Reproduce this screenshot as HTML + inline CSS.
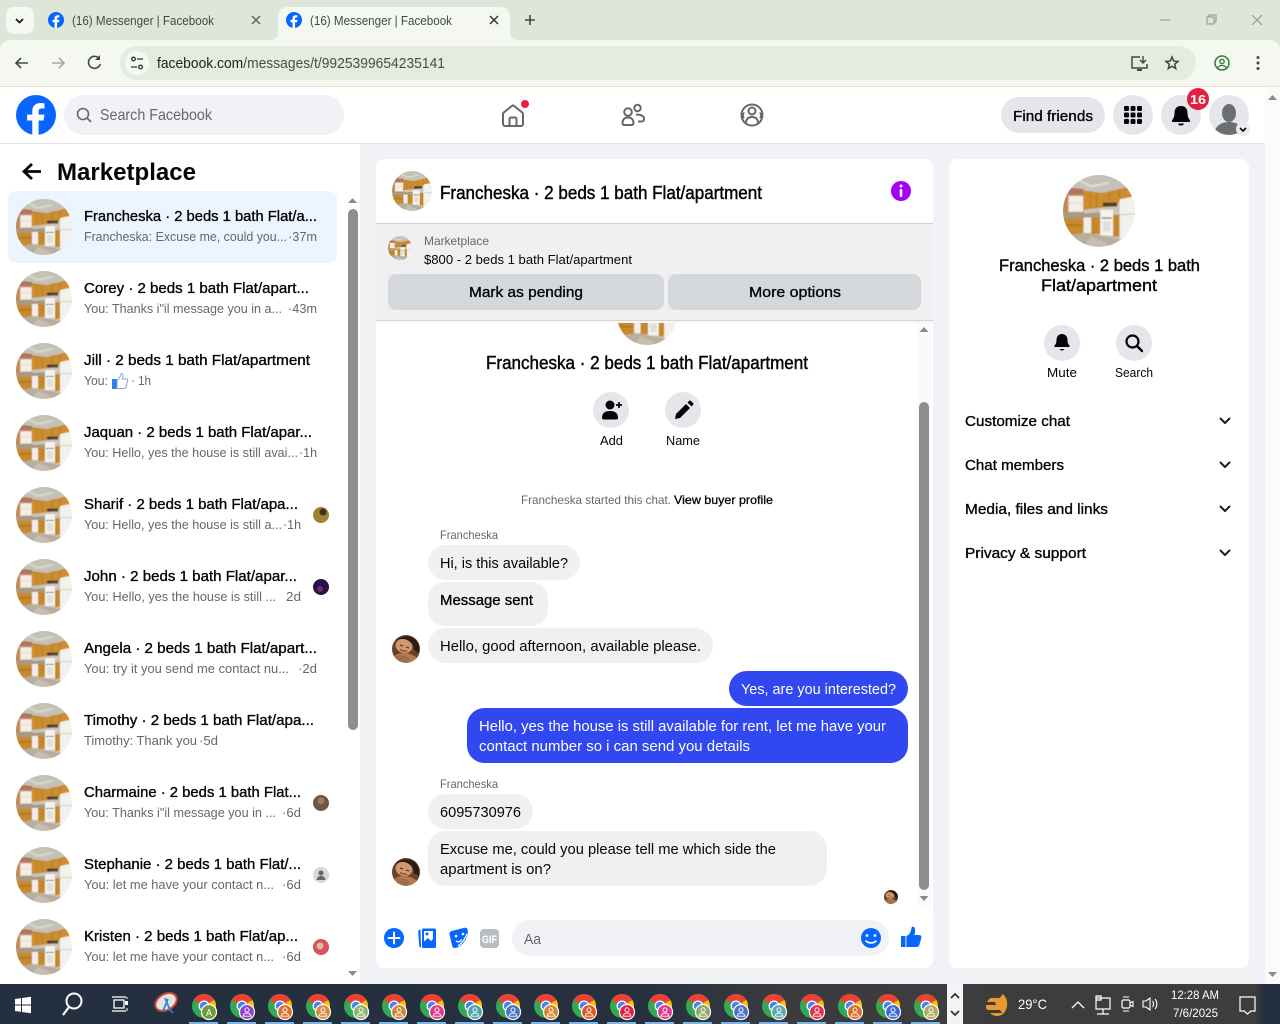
<!DOCTYPE html>
<html lang="en"><head><meta charset="utf-8"><title>(16) Messenger | Facebook</title>
<style>
html,body{margin:0;padding:0;width:1280px;height:1024px;overflow:hidden;background:#fff}
svg{display:block;position:absolute;left:0;top:0}
text{font-family:"Liberation Sans",sans-serif;font-size:15px;fill:#050505}
.m{stroke:#050505;stroke-width:.35px}
.s{font-size:13px;fill:#65676b}
.g{font-size:12px;fill:#65676b}
.w{fill:#fff}
.t{font-size:13px;fill:#3f4a3e}
.tb{font-size:13px;fill:#fff}
.h{font-size:18px;stroke:#050505;stroke-width:.45px}
#tbi circle{stroke:#fff;stroke-width:1.200px}
</style></head><body>
<svg width="1280" height="1024" viewBox="0 0 1280 1024" xmlns="http://www.w3.org/2000/svg">
<defs>
<clipPath id="c56"><circle cx="28" cy="28" r="28"/></clipPath>
<filter id="soft" x="-5%" y="-5%" width="110%" height="110%"><feGaussianBlur stdDeviation=".4"/></filter>
<linearGradient id="tbg" x1="0" x2="1" y1="0" y2="0"><stop offset="0" stop-color="#24303f"/><stop offset=".5" stop-color="#26303f"/><stop offset=".62" stop-color="#3c3c3f"/><stop offset=".98" stop-color="#3f3d3b"/><stop offset=".988" stop-color="#24303f"/></linearGradient>
<symbol id="k" viewBox="0 0 56 56"><g clip-path="url(#c56)"><g filter="url(#soft)">
<rect x="-2" y="-2" width="60" height="60" fill="#c9c5ba"/>
<path d="M-2-2h60v12L44 11 30 14 16 11-2 8z" fill="#c4c1b7"/>
<path d="M10 3l12 6 14-3" fill="none" stroke="#dcd9d0" stroke-width="2"/>
<path d="M-2 9l18 2v6H-2z" fill="#b3745c"/>
<path d="M-2 15h18v19H-2z" fill="#c08a54"/>
<rect x="4" y="16" width="12" height="13" fill="#f3efe8" stroke="#cf9a80" stroke-width=".8"/>
<path d="M4 22h12" stroke="#d8d2c8" stroke-width=".7"/>
<path d="M16 12l14 2 14-3 10-3 4 2v10H44l-2 4-26 3z" fill="#cb8d2e"/>
<path d="M21 13v12M26 14v11M36 13v9M44 11v8" stroke="#a86e1e" stroke-width=".5"/>
<rect x="31" y="21.500" width="11" height="3" fill="#4b4033"/>
<path d="M-2 29h18v1l15-1v5H-2z" fill="#a99b82"/>
<path d="M-2 34h18v12l-18 2z" fill="#c88a2c"/>
<path d="M1 39h14" stroke="#8e6020" stroke-width=".7"/>
<rect x="16" y="33" width="6" height="12" fill="#f0efe9"/>
<rect x="22" y="33" width="7" height="13" fill="#c68828"/>
<rect x="29" y="27" width="10" height="20" fill="#f4f3ef"/>
<rect x="30" y="33" width="8" height="1" fill="#7d7970"/><rect x="31" y="36" width="6" height="8" fill="#e0dfd9"/>
<path d="M39 31h5v17h-5z" fill="#c68828"/>
<path d="M44 19l14-3v32l-14 2z" fill="#f2f1ed"/>
<path d="M44 31l14-1" stroke="#b8b6ae" stroke-width=".6"/>
<path d="M-2 48l18-3 13 2 15 3 14-2v10H-2z" fill="#b9ae9d"/>
<path d="M14 58l8-10 12 5 2 5z" fill="#c9bfb0"/>
</g></g></symbol>
<symbol id="fb" viewBox="0 0 40 40"><circle cx="20" cy="20" r="20" fill="#0866ff"/><path d="M22.6 40V25.5h4.9l.9-5.9h-5.8v-3.1c0-1.9.7-3 3.2-3h2.7V8.4c-1.1-.2-2.5-.3-4.2-.3-5 0-8 3-8 8.2v3.3h-5.200v5.900h5.200V40z" fill="#fff"/></symbol>
<symbol id="fc" viewBox="0 0 56 56"><g clip-path="url(#c56)"><g filter="url(#soft)"><rect width="56" height="56" fill="#6a4028"/><path d="M0 56c2-16 10-20 24-20s26 6 32 20z" fill="#b07a54"/><ellipse cx="24" cy="22" rx="17" ry="14" transform="rotate(15 24 22)" fill="#cf9670"/><path d="M8 12C14 2 32 0 42 6c12 7 14 18 12 30l-10-6c0-10-8-20-20-22-6-1-12 0-16 4z" fill="#2a1a14"/><path d="M16 20l6 2M28 24l6 2" stroke="#4a2a1c" stroke-width="2"/><path d="M16 29c5 3 10 4 14 3" stroke="#8d3f32" stroke-width="2.500" fill="none"/><path d="M4 44c10-6 22-4 32 4l-4 8H6z" fill="#a06c48"/></g></g></symbol>
<symbol id="ch" viewBox="0 0 24 24">
<circle cx="12" cy="12" r="12" fill="#34a853"/>
<path d="M12 12L1.600 6A12 12 0 0 1 22.400 6z" fill="#ea4335"/>
<path d="M12 12L22.400 6A12 12 0 0 1 12 24z" fill="#fbbc04"/>
<circle cx="12" cy="12" r="5.500" fill="#fff"/><circle cx="12" cy="12" r="4.200" fill="#4285f4"/></symbol>
<symbol id="par" viewBox="0 0 20 20"><circle cx="10" cy="7" r="3" fill="none" stroke="#fff" stroke-width="1.300"/><path d="M4.500 16c.5-3 2.500-4.500 5.500-4.500s5 1.500 5.500 4.500z" fill="none" stroke="#fff" stroke-width="1.300"/></symbol>
<path id="chev" d="M-4.500-2.500L0 2 4.500-2.500" fill="none" stroke="#1c1e21" stroke-width="2" stroke-linecap="round" stroke-linejoin="round"/>
</defs>

<!-- window chrome -->
<rect width="1280" height="87" fill="#dde6d8"/>
<rect x="6" y="7" width="28" height="27" rx="8" fill="#f5f8f1"/>
<path d="M16 19l3.500 3.500L23 19" fill="none" stroke="#1f1f1f" stroke-width="1.800"/>
<use href="#fb" x="48" y="12" width="16" height="16"/>
<text class="t" x="72" y="25" textLength="142" lengthAdjust="spacingAndGlyphs">(16) Messenger | Facebook</text>
<path d="M252 16l8 8m0-8l-8 8" stroke="#5a645a" stroke-width="1.500"/>
<path d="M270 40c6 0 8-3 8-8V17c0-6 4-10 10-10h212c6 0 10 4 10 10v15c0 5 2 8 8 8z" fill="#f4f8f0"/>
<use href="#fb" x="286" y="12" width="16" height="16"/>
<text class="t" x="310" y="25" textLength="142" lengthAdjust="spacingAndGlyphs">(16) Messenger | Facebook</text>
<path d="M490 16l8 8m0-8l-8 8" stroke="#2f372f" stroke-width="1.500"/>
<path d="M530 15v10m-5-5h10" stroke="#3f4a3e" stroke-width="1.600"/>
<path d="M1160 20h10" stroke="#8d958b" stroke-width="1"/>
<path d="M1207 17h7v7h-7zM1209 17v-2h7v7h-2" fill="none" stroke="#8d958b"/>
<path d="M1252 15l10 10m0-10l-10 10" stroke="#8d958b"/>
<path d="M0 87V52c0-8 4-12 12-12h1256c8 0 12 4 12 12v35z" fill="#f4f8f0"/>
<rect x="120" y="46" width="1076" height="34" rx="17" fill="#e4ecdf"/>
<circle cx="137" cy="63" r="12" fill="#f4f8f0"/>
<path d="M16 63h12M21 58l-5 5 5 5" fill="none" stroke="#3f4a3e" stroke-width="1.600"/>
<path d="M52 63h12m-5-5l5 5-5 5" fill="none" stroke="#a2aa9f" stroke-width="1.600"/>
<path d="M99.500 59a6 6 0 1 0 .8 5" fill="none" stroke="#3f4a3e" stroke-width="1.600"/><path d="M100 55v5h-5z" fill="#3f4a3e"/>
<circle cx="133.500" cy="59" r="1.800" fill="none" stroke="#2f372f" stroke-width="1.300"/><path d="M137 59h6M131 67h6" stroke="#2f372f" stroke-width="1.300"/><circle cx="140.500" cy="67" r="1.800" fill="none" stroke="#2f372f" stroke-width="1.300"/>
<text x="157" y="68" textLength="288" lengthAdjust="spacingAndGlyphs" style="font-size:14.500px;fill:#474f46"><tspan fill="#1f1f1f">facebook.com</tspan>/messages/t/9925399654235141</text>
<path d="M1140 57h-8v11h15v-4" fill="none" stroke="#3f4a3e" stroke-width="1.500"/><path d="M1137 70h5" stroke="#3f4a3e" stroke-width="2"/><path d="M1143 56v6m-3-2l3 3 3-3" fill="none" stroke="#3f4a3e" stroke-width="1.400"/>
<path d="M1172 57l1.700 4 4.300.4-3.300 2.800 1 4.300-3.700-2.300-3.700 2.300 1-4.300-3.300-2.800 4.300-.4z" fill="none" stroke="#3f4a3e" stroke-width="1.500"/>
<circle cx="1222" cy="63" r="7" fill="none" stroke="#2e7d32" stroke-width="1.500"/><circle cx="1222" cy="61.500" r="2.200" fill="none" stroke="#2e7d32" stroke-width="1.300"/><path d="M1217.500 68c1-2 2.500-2.500 4.500-2.500s3.500.5 4.500 2.500" fill="none" stroke="#2e7d32" stroke-width="1.300"/>
<circle cx="1258" cy="57.500" r="1.500" fill="#3f4a3e"/><circle cx="1258" cy="63" r="1.500" fill="#3f4a3e"/><circle cx="1258" cy="68.500" r="1.500" fill="#3f4a3e"/>
<rect y="86" width="1280" height="1" fill="#dfe5da"/>

<!-- page -->
<rect y="87" width="1280" height="897" fill="#f0f2f5"/>
<rect y="87" width="360" height="897" fill="#fff"/>
<rect y="87" width="1265" height="56" fill="#fff"/>
<rect y="143" width="1265" height="1" fill="#e2e4e8"/>
<rect x="1265" y="87" width="15" height="897" fill="#fbfbfb"/>
<path d="M1268 100l4.500-5 4.500 5zM1268 972l4.500 5 4.500-5z" fill="#8a8a8a"/>

<!-- fb header -->
<use href="#fb" x="16" y="95" width="40" height="40"/>
<rect x="64" y="95" width="280" height="40" rx="20" fill="#f0f2f5"/>
<circle cx="83" cy="114" r="5.500" fill="none" stroke="#65676b" stroke-width="1.600"/><path d="M87 118l4 4" stroke="#65676b" stroke-width="1.800"/>
<text x="100" y="120" textLength="112" lengthAdjust="spacingAndGlyphs" style="font-size:16px;fill:#65676b">Search Facebook</text>
<path d="M503 124v-10a2 2 0 0 1 .8-1.600l8-6.400a2 2 0 0 1 2.400 0l8 6.400a2 2 0 0 1 .8 1.600v10a2 2 0 0 1-2 2h-16a2 2 0 0 1-2-2zM509.500 126v-7a1.500 1.500 0 0 1 1.500-1.500h4a1.500 1.500 0 0 1 1.500 1.500v7" fill="none" stroke="#65676b" stroke-width="2"/>
<circle cx="525" cy="104" r="4" fill="#e41e3f"/>
<circle cx="628" cy="112" r="3.800" fill="none" stroke="#65676b" stroke-width="2"/><circle cx="637.500" cy="108" r="3.200" fill="none" stroke="#65676b" stroke-width="2"/>
<path d="M624 125a2 2 0 0 1-1.500-2c0-3.500 2-5.500 5.500-5.500s5.500 2 5.500 5.500a2 2 0 0 1-1.500 2z" fill="none" stroke="#65676b" stroke-width="2"/><path d="M636 114.500c4.500 0 8 1 8 4.500 0 2-1 2.500-3 2.500h-3" fill="none" stroke="#65676b" stroke-width="2"/>
<circle cx="752" cy="115" r="10.500" fill="none" stroke="#65676b" stroke-width="2"/><circle cx="752" cy="111" r="3.500" fill="none" stroke="#65676b" stroke-width="2"/><path d="M746 123c0-4 2.500-6 6-6s6 2 6 6" fill="none" stroke="#65676b" stroke-width="2"/><path d="M744 118c-2-2-1-5 .5-5M760 118c2-2 1-5-.5-5" fill="none" stroke="#65676b" stroke-width="1.800"/>
<rect x="1001" y="97" width="104" height="36" rx="18" fill="#e4e6eb"/>
<text class="m" x="1013" y="121" textLength="80" lengthAdjust="spacingAndGlyphs">Find friends</text>
<circle cx="1133" cy="115" r="20" fill="#e4e6eb"/>
<g fill="#050505"><rect x="1124" y="106" width="5" height="5" rx="1.200"/><rect x="1130.500" y="106" width="5" height="5" rx="1.200"/><rect x="1137" y="106" width="5" height="5" rx="1.200"/><rect x="1124" y="112.500" width="5" height="5" rx="1.200"/><rect x="1130.500" y="112.500" width="5" height="5" rx="1.200"/><rect x="1137" y="112.500" width="5" height="5" rx="1.200"/><rect x="1124" y="119" width="5" height="5" rx="1.200"/><rect x="1130.500" y="119" width="5" height="5" rx="1.200"/><rect x="1137" y="119" width="5" height="5" rx="1.200"/></g>
<circle cx="1181" cy="115" r="20" fill="#e4e6eb"/>
<path d="M1181 106c-4.500 0-6.500 3-6.500 7 0 4-1.500 6-2.500 7.500-.4.700 0 1.500 1 1.500h16c1 0 1.400-.8 1-1.500-1-1.500-2.500-3.500-2.500-7.500 0-4-2-7-6.500-7zM1178 123.500c.5 1.500 1.500 2 3 2s2.500-.5 3-2z" fill="#050505"/>
<circle cx="1198" cy="99" r="11" fill="#e41e3f"/>
<text x="1190" y="104" textLength="16" lengthAdjust="spacingAndGlyphs" style="font-size:13px;font-weight:700;fill:#fff">16</text>
<clipPath id="ava"><circle cx="1229" cy="115" r="20"/></clipPath>
<circle cx="1229" cy="115" r="20" fill="#e4e6eb"/><g clip-path="url(#ava)"><ellipse cx="1229" cy="113" rx="7" ry="9" fill="#6b6e73"/><path d="M1214 136c0-9 6-14 15-14s15 5 15 14z" fill="#6b6e73"/></g>
<circle cx="1243" cy="129" r="7" fill="#e9ebee"/><path d="M1240 128l3 3 3-3" fill="none" stroke="#050505" stroke-width="1.600"/>

<!-- left sidebar -->
<path d="M32 164l-8 7.500 8 7.500M25 171.500h16" fill="none" stroke="#050505" stroke-width="2.800"/>
<text x="57" y="180" textLength="139" lengthAdjust="spacingAndGlyphs" style="font-size:24px;font-weight:700">Marketplace</text>
<rect x="8" y="191" width="329" height="72" rx="8" fill="#ebf4ff"/>
<rect x="346" y="191" width="14" height="793" fill="#fff"/>
<path d="M348 203l4.500-5 4.500 5zM348 971l4.500 5 4.500-5z" fill="#8a8a8a"/>
<rect x="348" y="209" width="10" height="521" rx="5" fill="#8f8f8f"/>
<use href="#k" x="16" y="199" width="56" height="56"/><use href="#k" x="16" y="271" width="56" height="56"/><use href="#k" x="16" y="343" width="56" height="56"/><use href="#k" x="16" y="415" width="56" height="56"/><use href="#k" x="16" y="487" width="56" height="56"/><use href="#k" x="16" y="559" width="56" height="56"/><use href="#k" x="16" y="631" width="56" height="56"/><use href="#k" x="16" y="703" width="56" height="56"/><use href="#k" x="16" y="775" width="56" height="56"/><use href="#k" x="16" y="847" width="56" height="56"/><use href="#k" x="16" y="919" width="56" height="56"/>
<text class="m" x="84" y="221" textLength="233" lengthAdjust="spacingAndGlyphs">Francheska · 2 beds 1 bath Flat/a...</text>
<text class="s" x="84" y="241" textLength="203" lengthAdjust="spacingAndGlyphs">Francheska: Excuse me, could you...</text><text class="s" x="288" y="241" textLength="29" lengthAdjust="spacingAndGlyphs">·37m</text>
<text class="m" x="84" y="293" textLength="225" lengthAdjust="spacingAndGlyphs">Corey · 2 beds 1 bath Flat/apart...</text>
<text class="s" x="84" y="313" textLength="198" lengthAdjust="spacingAndGlyphs">You: Thanks i"il message you in a...</text><text class="s" x="288" y="313" textLength="29" lengthAdjust="spacingAndGlyphs">·43m</text>
<text class="m" x="84" y="365" textLength="226" lengthAdjust="spacingAndGlyphs">Jill · 2 beds 1 bath Flat/apartment</text>
<text class="s" x="84" y="385" textLength="24" lengthAdjust="spacingAndGlyphs">You:</text>
<path d="M112 379h5v10h-5z" fill="#2f80ed"/><path d="M117 380c2-1 3-3 4-6 1-1 2 0 2 2l-.5 3h4c1 0 1.500 1 1 2l-1.500 6c-.2 1-1 1.500-2 1.500h-7z" fill="#fff" stroke="#7fa6d8"/>
<text class="s" x="131" y="385" textLength="20" lengthAdjust="spacingAndGlyphs">· 1h</text>
<text class="m" x="84" y="437" textLength="228" lengthAdjust="spacingAndGlyphs">Jaquan · 2 beds 1 bath Flat/apar...</text>
<text class="s" x="84" y="457" textLength="214" lengthAdjust="spacingAndGlyphs">You: Hello, yes the house is still avai...</text><text class="s" x="299" y="457" textLength="18" lengthAdjust="spacingAndGlyphs">·1h</text>
<text class="m" x="84" y="509" textLength="214" lengthAdjust="spacingAndGlyphs">Sharif · 2 beds 1 bath Flat/apa...</text>
<text class="s" x="84" y="529" textLength="198" lengthAdjust="spacingAndGlyphs">You: Hello, yes the house is still a...</text><text class="s" x="283" y="529" textLength="18" lengthAdjust="spacingAndGlyphs">·1h</text>
<text class="m" x="84" y="581" textLength="213" lengthAdjust="spacingAndGlyphs">John · 2 beds 1 bath Flat/apar...</text>
<text class="s" x="84" y="601" textLength="192" lengthAdjust="spacingAndGlyphs">You: Hello, yes the house is still ...</text><text class="s" x="286" y="601" textLength="15" lengthAdjust="spacingAndGlyphs">2d</text>
<text class="m" x="84" y="653" textLength="233" lengthAdjust="spacingAndGlyphs">Angela · 2 beds 1 bath Flat/apart...</text>
<text class="s" x="84" y="673" textLength="205" lengthAdjust="spacingAndGlyphs">You: try it you send me contact nu...</text><text class="s" x="298" y="673" textLength="19" lengthAdjust="spacingAndGlyphs">·2d</text>
<text class="m" x="84" y="725" textLength="230" lengthAdjust="spacingAndGlyphs">Timothy · 2 beds 1 bath Flat/apa...</text>
<text class="s" x="84" y="745" textLength="113" lengthAdjust="spacingAndGlyphs">Timothy: Thank you</text><text class="s" x="199" y="745" textLength="19" lengthAdjust="spacingAndGlyphs">·5d</text>
<text class="m" x="84" y="797" textLength="217" lengthAdjust="spacingAndGlyphs">Charmaine · 2 beds 1 bath Flat...</text>
<text class="s" x="84" y="817" textLength="192" lengthAdjust="spacingAndGlyphs">You: Thanks i"il message you in ...</text><text class="s" x="282" y="817" textLength="19" lengthAdjust="spacingAndGlyphs">·6d</text>
<text class="m" x="84" y="869" textLength="217" lengthAdjust="spacingAndGlyphs">Stephanie · 2 beds 1 bath Flat/...</text>
<text class="s" x="84" y="889" textLength="190" lengthAdjust="spacingAndGlyphs">You: let me have your contact n...</text><text class="s" x="282" y="889" textLength="19" lengthAdjust="spacingAndGlyphs">·6d</text>
<text class="m" x="84" y="941" textLength="214" lengthAdjust="spacingAndGlyphs">Kristen · 2 beds 1 bath Flat/ap...</text>
<text class="s" x="84" y="961" textLength="190" lengthAdjust="spacingAndGlyphs">You: let me have your contact n...</text><text class="s" x="282" y="961" textLength="19" lengthAdjust="spacingAndGlyphs">·6d</text>
<circle cx="321" cy="515" r="8" fill="#a08232"/><circle cx="323" cy="512" r="3.500" fill="#3c3320"/>
<circle cx="321" cy="587" r="8" fill="#2a1248"/><circle cx="320" cy="589" r="3" fill="#6a2c6a"/>
<circle cx="321" cy="803" r="8" fill="#6e5644"/><circle cx="321" cy="801" r="3.500" fill="#a5775c"/>
<circle cx="321" cy="875" r="8" fill="#d5d8dc"/><circle cx="321" cy="873" r="2.500" fill="#65676b"/><path d="M316.500 880c.5-3 2-4 4.500-4s4 1 4.500 4z" fill="#65676b"/>
<circle cx="321" cy="947" r="8" fill="#d8525a"/><circle cx="320" cy="946" r="3.500" fill="#e6b6a6"/>

<!-- main card -->
<rect x="376" y="159" width="557" height="809" rx="8" fill="#fff"/>
<use href="#k" x="392" y="171" width="40" height="40"/>
<text class="h" x="440" y="199" textLength="322" lengthAdjust="spacingAndGlyphs">Francheska · 2 beds 1 bath Flat/apartment</text>
<circle cx="901" cy="191" r="10" fill="#a400f5"/><circle cx="901" cy="186" r="1.500" fill="#fff"/><rect x="899.700" y="189" width="2.600" height="8" rx="1" fill="#fff"/>
<use href="#k" x="617" y="285" width="60" height="60"/>
<rect x="376" y="223" width="557" height="98" fill="#f0f0f0"/>
<rect x="376" y="223" width="557" height="1" fill="#ccd0d5"/>
<rect x="376" y="320" width="557" height="1" fill="#d5d5d5"/><rect x="376" y="321" width="557" height="2" fill="#f7f7f7"/>
<use href="#k" x="388" y="236" width="24" height="24"/>
<text class="g" x="424" y="245" textLength="65" lengthAdjust="spacingAndGlyphs">Marketplace</text>
<text x="424" y="264" textLength="208" lengthAdjust="spacingAndGlyphs" style="font-size:13px">$800 - 2 beds 1 bath Flat/apartment</text>
<rect x="388" y="274" width="276" height="36" rx="8" fill="#d4d7dc"/><rect x="668" y="274" width="253" height="36" rx="8" fill="#d4d7dc"/>
<text class="m" x="469" y="297" textLength="114" lengthAdjust="spacingAndGlyphs">Mark as pending</text>
<text class="m" x="749" y="297" textLength="92" lengthAdjust="spacingAndGlyphs">More options</text>
<rect x="917" y="323" width="14" height="584" fill="#fafafa"/>
<path d="M919.500 332l4.500-5 4.500 5zM919.500 896l4.500 5 4.500-5z" fill="#8a8a8a"/>
<rect x="919" y="402" width="10" height="488" rx="5" fill="#8f8f8f"/>
<text class="h" x="486" y="369" textLength="322" lengthAdjust="spacingAndGlyphs">Francheska · 2 beds 1 bath Flat/apartment</text>
<circle cx="611" cy="410" r="18" fill="#e4e6eb"/><circle cx="610" cy="405" r="4.500" fill="#050505"/><path d="M602 418c0-5 3-7 8-7s8 2 8 7c0 1-.5 1.500-2 1.500h-12c-1.500 0-2-.5-2-1.500z" fill="#050505"/><path d="M619 402v6m-3-3h6" stroke="#050505" stroke-width="1.700"/>
<circle cx="683" cy="410" r="18" fill="#e4e6eb"/><path d="M675 419l1-5 10-10 4 4-10 10zM687.500 402.500l1.500-1.500c.6-.6 1.400-.6 2 0l2 2c.6.6.6 1.400 0 2l-1.500 1.500z" fill="#050505"/>
<text x="600" y="445" textLength="23" lengthAdjust="spacingAndGlyphs" style="font-size:13px">Add</text>
<text x="666" y="445" textLength="34" lengthAdjust="spacingAndGlyphs" style="font-size:13px">Name</text>
<text class="g" x="521" y="504" textLength="150" lengthAdjust="spacingAndGlyphs">Francheska started this chat.</text>
<text x="674" y="504" textLength="99" lengthAdjust="spacingAndGlyphs" style="font-size:12px;stroke:#050505;stroke-width:.3px">View buyer profile</text>
<text class="g" x="440" y="539" textLength="58" lengthAdjust="spacingAndGlyphs">Francheska</text>
<rect x="428" y="545" width="152" height="35" rx="17.500" fill="#f0f0f0"/>
<text x="440" y="568" textLength="128" lengthAdjust="spacingAndGlyphs">Hi, is this available?</text>
<rect x="428" y="582" width="120" height="44" rx="17" fill="#f0f0f0"/>
<text class="m" x="440" y="605" textLength="93" lengthAdjust="spacingAndGlyphs">Message sent</text>
<rect x="428" y="628" width="285" height="35" rx="17.500" fill="#f0f0f0"/>
<text x="440" y="651" textLength="261" lengthAdjust="spacingAndGlyphs">Hello, good afternoon, available please.</text>
<use href="#fc" x="392" y="635" width="28" height="28"/>
<rect x="729" y="671" width="179" height="35" rx="17.500" fill="#3147f0"/>
<text class="w" x="741" y="694" textLength="155" lengthAdjust="spacingAndGlyphs">Yes, are you interested?</text>
<rect x="467" y="708" width="441" height="55" rx="17.500" fill="#3147f0"/>
<text class="w" x="479" y="731" textLength="407" lengthAdjust="spacingAndGlyphs">Hello, yes the house is still available for rent, let me have your</text>
<text class="w" x="479" y="751" textLength="271" lengthAdjust="spacingAndGlyphs">contact number so i can send you details</text>
<text class="g" x="440" y="788" textLength="58" lengthAdjust="spacingAndGlyphs">Francheska</text>
<rect x="428" y="794" width="105" height="35" rx="17.500" fill="#f0f0f0"/>
<text x="440" y="817" textLength="81" lengthAdjust="spacingAndGlyphs">6095730976</text>
<rect x="428" y="831" width="399" height="55" rx="17.500" fill="#f0f0f0"/>
<text x="440" y="854" textLength="336" lengthAdjust="spacingAndGlyphs">Excuse me, could you please tell me which side the</text>
<text x="440" y="874" textLength="111" lengthAdjust="spacingAndGlyphs">apartment is on?</text>
<use href="#fc" x="392" y="858" width="28" height="28"/>
<use href="#fc" x="884" y="890" width="14" height="14"/>
<!-- composer -->
<circle cx="394" cy="938" r="10" fill="#0866ff"/><path d="M394 932.500v11m-5.500-5.500h11" stroke="#fff" stroke-width="2" stroke-linecap="round"/>
<path d="M420.500 929.500c-1.500 0-2.500 1-2.300 2.500l1 14c.1 1 .8 1.500 1.800 1.500z" fill="#0866ff"/><rect x="422" y="928.500" width="14" height="19.500" rx="1.500" fill="#0866ff"/><path d="M424 931h9v8l-2 2-3-3-4 3.500z" fill="#fff"/><circle cx="427" cy="934" r="1.500" fill="#0866ff"/>
<path d="M449.500 934c-.3-1.300.5-2.500 1.800-2.900l13.200-3.300c1.600-.4 3 .6 3.200 2.200.5 5-1.200 9-4 12.500-2.400 3-5.500 5-8.500 5.500-1.600.3-2.800-.6-3.100-2.200z" fill="#0866ff"/>
<circle cx="456" cy="936" r="1.300" fill="#fff"/><circle cx="463" cy="934" r="1.300" fill="#fff"/><path d="M456 941c2 1.500 4 1 5.500-1.500M467 934c-2 5-5 9-9 12" fill="none" stroke="#fff" stroke-width="1.300"/>
<rect x="480" y="929" width="19" height="19" rx="4" fill="#b8bcc3"/>
<text x="482" y="943" textLength="15" lengthAdjust="spacingAndGlyphs" style="font-size:11px;font-weight:700;fill:#fff">GIF</text>
<rect x="512" y="920" width="377" height="36" rx="18" fill="#f0f2f5"/>
<text x="524" y="944" textLength="17" lengthAdjust="spacingAndGlyphs" style="fill:#65676b">Aa</text>
<circle cx="871" cy="938" r="10" fill="#0866ff"/><circle cx="867" cy="935.500" r="1.400" fill="#fff"/><circle cx="875" cy="935.500" r="1.400" fill="#fff"/><path d="M866 941c2.500 2.500 7.500 2.500 10 0" fill="none" stroke="#fff" stroke-width="1.600" stroke-linecap="round"/>
<path d="M901 936h4.500v11h-4.500zM906.500 936c2.500-1 4-3 5-8 .2-1.500 2-1.800 3-.5 1 1.500.8 5-.2 7.500h5c1.500 0 2.500 1.500 2 3l-2 7c-.4 1.500-1.500 2-3 2h-10z" fill="#0866ff"/>

<!-- right card -->
<rect x="949" y="159" width="300" height="809" rx="8" fill="#fff"/>
<use href="#k" x="1063" y="175" width="72" height="72"/>
<text x="999" y="271" textLength="201" lengthAdjust="spacingAndGlyphs" style="font-size:17px;stroke:#050505;stroke-width:.4px">Francheska · 2 beds 1 bath</text>
<text x="1041" y="291" textLength="116" lengthAdjust="spacingAndGlyphs" style="font-size:17px;stroke:#050505;stroke-width:.4px">Flat/apartment</text>
<circle cx="1062" cy="343" r="18" fill="#e4e6eb"/><path d="M1062 334c-3.500 0-5.500 2.500-5.500 6 0 3-1 4.500-2 5.500-.5.600-.2 1.500.8 1.500h13.400c1 0 1.300-.9.800-1.500-1-1-2-2.500-2-5.500 0-3.500-2-6-5.500-6zM1059.500 349c.5 1 1.300 1.500 2.500 1.500s2-.5 2.500-1.500z" fill="#050505"/>
<circle cx="1134" cy="343" r="18" fill="#e4e6eb"/><circle cx="1132.500" cy="341.500" r="6" fill="none" stroke="#050505" stroke-width="2.200"/><path d="M1137 346l5 5" stroke="#050505" stroke-width="2.400" stroke-linecap="round"/>
<text x="1047" y="377" textLength="30" lengthAdjust="spacingAndGlyphs" style="font-size:13px">Mute</text>
<text x="1115" y="377" textLength="38" lengthAdjust="spacingAndGlyphs" style="font-size:13px">Search</text>
<text class="m" x="965" y="426" textLength="105" lengthAdjust="spacingAndGlyphs">Customize chat</text>
<text class="m" x="965" y="470" textLength="99" lengthAdjust="spacingAndGlyphs">Chat members</text>
<text class="m" x="965" y="514" textLength="143" lengthAdjust="spacingAndGlyphs">Media, files and links</text>
<text class="m" x="965" y="558" textLength="121" lengthAdjust="spacingAndGlyphs">Privacy &amp; support</text>
<use href="#chev" x="1225" y="421"/><use href="#chev" x="1225" y="465"/><use href="#chev" x="1225" y="509"/><use href="#chev" x="1225" y="553"/>

<!-- taskbar -->
<rect y="984" width="1280" height="40" fill="url(#tbg)"/>
<path d="M15 999l6-.9v6.400h-6zM22 998l9-1.300v7.800h-9zM15 1005.500h6v6.400l-6-.9zM22 1005.500h9v7.800l-9-1.300z" fill="#fff"/>
<circle cx="74" cy="1001" r="7.500" fill="none" stroke="#fff" stroke-width="2"/><path d="M69 1007l-6 8" stroke="#fff" stroke-width="2.200"/>
<rect x="114" y="1000" width="10" height="8" fill="none" stroke="#fff" stroke-width="1.300"/><path d="M112 997h14M112 1011h14" stroke="#fff" stroke-width="1.300"/><rect x="125" y="1001" width="3" height="4" fill="#fff"/><path d="M127 997v2M127 1008v3" stroke="#fff"/>
<ellipse cx="166" cy="1002" rx="11.500" ry="8" transform="rotate(-30 166 1002)" fill="#e7e3dc" stroke="#c8443c" stroke-width="2"/><path d="M165 998l5 12 3 3M168 999l-5 12" stroke="#2b82d9" stroke-width="1.700" fill="none"/>
<g id="tbi">
<use href="#ch" x="192" y="994" width="24" height="24"/><circle cx="209" cy="1012" r="7.500" fill="#6e9a3c"/><text x="206" y="1016" textLength="6" lengthAdjust="spacingAndGlyphs" style="font-size:10px;fill:#fff">A</text>
<use href="#ch" x="230" y="994" width="24" height="24"/><circle cx="247" cy="1012" r="7.500" fill="#8e44c8"/><use href="#par" x="240" y="1005" width="14" height="14"/>
<use href="#ch" x="268" y="994" width="24" height="24"/><circle cx="285" cy="1012" r="7.500" fill="#d9722d"/><use href="#par" x="278" y="1005" width="14" height="14"/>
<use href="#ch" x="306" y="994" width="24" height="24"/><circle cx="323" cy="1012" r="7.500" fill="#d98a3a"/><use href="#par" x="316" y="1005" width="14" height="14"/>
<use href="#ch" x="344" y="994" width="24" height="24"/><circle cx="361" cy="1012" r="7.500" fill="#8db36f"/><use href="#par" x="354" y="1005" width="14" height="14"/>
<use href="#ch" x="382" y="994" width="24" height="24"/><circle cx="399" cy="1012" r="7.500" fill="#d4843a"/><use href="#par" x="392" y="1005" width="14" height="14"/>
<use href="#ch" x="420" y="994" width="24" height="24"/><circle cx="437" cy="1012" r="7.500" fill="#e0388c"/><use href="#par" x="430" y="1005" width="14" height="14"/>
<use href="#ch" x="458" y="994" width="24" height="24"/><circle cx="475" cy="1012" r="7.500" fill="#4aa3ad"/><use href="#par" x="468" y="1005" width="14" height="14"/>
<use href="#ch" x="496" y="994" width="24" height="24"/><circle cx="513" cy="1012" r="7.500" fill="#4a72c8"/><use href="#par" x="506" y="1005" width="14" height="14"/>
<use href="#ch" x="534" y="994" width="24" height="24"/><circle cx="551" cy="1012" r="7.500" fill="#d9842f"/><use href="#par" x="544" y="1005" width="14" height="14"/>
<use href="#ch" x="572" y="994" width="24" height="24"/><circle cx="589" cy="1012" r="7.500" fill="#e2572a"/><use href="#par" x="582" y="1005" width="14" height="14"/>
<use href="#ch" x="610" y="994" width="24" height="24"/><circle cx="627" cy="1012" r="7.500" fill="#e0203c"/><use href="#par" x="620" y="1005" width="14" height="14"/>
<use href="#ch" x="648" y="994" width="24" height="24"/><circle cx="665" cy="1012" r="7.500" fill="#e0388c"/><use href="#par" x="658" y="1005" width="14" height="14"/>
<use href="#ch" x="686" y="994" width="24" height="24"/><circle cx="703" cy="1012" r="7.500" fill="#8ca86c"/><use href="#par" x="696" y="1005" width="14" height="14"/>
<use href="#ch" x="724" y="994" width="24" height="24"/><circle cx="741" cy="1012" r="7.500" fill="#4a72c8"/><use href="#par" x="734" y="1005" width="14" height="14"/>
<use href="#ch" x="762" y="994" width="24" height="24"/><circle cx="779" cy="1012" r="7.500" fill="#5fa8ac"/><use href="#par" x="772" y="1005" width="14" height="14"/>
<use href="#ch" x="800" y="994" width="24" height="24"/><circle cx="817" cy="1012" r="7.500" fill="#e82e4e"/><use href="#par" x="810" y="1005" width="14" height="14"/>
<use href="#ch" x="838" y="994" width="24" height="24"/><circle cx="855" cy="1012" r="7.500" fill="#dd6a22"/><use href="#par" x="848" y="1005" width="14" height="14"/>
<use href="#ch" x="876" y="994" width="24" height="24"/><circle cx="893" cy="1012" r="7.500" fill="#3a6ad0"/><use href="#par" x="886" y="1005" width="14" height="14"/>
<use href="#ch" x="914" y="994" width="24" height="24"/><circle cx="931" cy="1012" r="7.500" fill="#b0a860"/><use href="#par" x="924" y="1005" width="14" height="14"/>
</g>
<path d="M189 1023h29M227 1023h29M265 1023h29M303 1023h29M341 1023h29M379 1023h29M417 1023h29M455 1023h29M493 1023h29M531 1023h29M569 1023h29M607 1023h29M645 1023h29M683 1023h29M721 1023h29M759 1023h29M797 1023h29M835 1023h29M873 1023h29M911 1023h29" stroke="#7ab5e8" stroke-width="2"/>
<rect x="947" y="984" width="16" height="40" fill="#f2f3f4"/>
<path d="M951 998l4-4 4 4M951 1011l4 4 4-4" fill="none" stroke="#333" stroke-width="1.800"/>
<path d="M1002 994c6 3 7 13 2 19-4 4-10 4-14 0h12l-2-3h-13c-1-2-1-3-1-5h10l-1-3h-8c1-2 2-3 4-4h8c2-1 3-2 3-4z" fill="#e89a30"/>
<text class="tb" x="1018" y="1009" textLength="29" lengthAdjust="spacingAndGlyphs" style="font-size:14px">29°C</text>
<path d="M1072 1008l6-6 6 6" fill="none" stroke="#fff" stroke-width="1.300"/>
<path d="M1096 998h14v11h-14zM1103 1009v5M1097 1014h12M1096 998v-2h5v4h-5" fill="none" stroke="#fff" stroke-width="1.200"/>
<rect x="1122" y="1000" width="8" height="8" rx="1.500" fill="none" stroke="#fff" stroke-width="1.200"/><path d="M1130 1003l3-1.500v5l-3-1.500M1123 997h6M1123 1011h6" fill="none" stroke="#fff" stroke-width="1.100"/>
<path d="M1143 1001h3l4-3v12l-4-3h-3zM1152.500 1001c1.500 2 1.500 4 0 6M1155 999c2.500 3 2.500 7 0 10" fill="none" stroke="#fff" stroke-width="1.100"/>
<text class="tb" x="1171" y="999" textLength="48" lengthAdjust="spacingAndGlyphs" style="font-size:12px">12:28 AM</text>
<text class="tb" x="1173" y="1017" textLength="45" lengthAdjust="spacingAndGlyphs" style="font-size:12px">7/6/2025</text>
<path d="M1240 997h15v14h-4l-3.500 3-3.500-3h-4z" fill="none" stroke="#fff" stroke-width="1.200"/>
</svg>
</body></html>
